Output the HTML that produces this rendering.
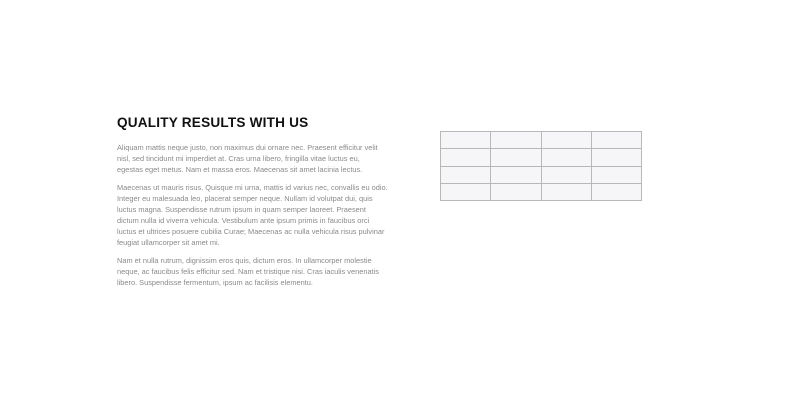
<!DOCTYPE html>
<html><head><style>
body{margin:0;width:800px;height:400px;background:#fff;position:relative;font-family:"Liberation Sans",sans-serif;overflow:hidden}
h1{position:absolute;left:117px;top:113px;margin:0;font-size:13.6px;font-weight:bold;color:#111;letter-spacing:0.2px;line-height:20px}
.p{position:absolute;left:117px;margin:0;font-size:7.4px;line-height:11.1px;color:#8a8a8a;white-space:nowrap}
table{position:absolute;left:440px;top:131px;border-collapse:collapse}
td{width:49.3px;height:16.3px;border:1px solid #b8b8b8;background:#f6f6f8;padding:0}
</style></head><body>
<h1>QUALITY RESULTS WITH US</h1>
<p class="p" style="top:142px">Aliquam mattis neque justo, non maximus dui ornare nec. Praesent efficitur velit<br>nisl, sed tincidunt mi imperdiet at. Cras urna libero, fringilla vitae luctus eu,<br>egestas eget metus. Nam et massa eros. Maecenas sit amet lacinia lectus.</p>
<p class="p" style="top:182px">Maecenas ut mauris risus. Quisque mi urna, mattis id varius nec, convallis eu odio.<br>Integer eu malesuada leo, placerat semper neque. Nullam id volutpat dui, quis<br>luctus magna. Suspendisse rutrum ipsum in quam semper laoreet. Praesent<br>dictum nulla id viverra vehicula. Vestibulum ante ipsum primis in faucibus orci<br>luctus et ultrices posuere cubilia Curae; Maecenas ac nulla vehicula risus pulvinar<br>feugiat ullamcorper sit amet mi.</p>
<p class="p" style="top:255px">Nam et nulla rutrum, dignissim eros quis, dictum eros. In ullamcorper molestie<br>neque, ac faucibus felis efficitur sed. Nam et tristique nisi. Cras iaculis venenatis<br>libero. Suspendisse fermentum, ipsum ac facilisis elementu.</p>
<table>
<tr><td></td><td></td><td></td><td></td></tr>
<tr><td></td><td></td><td></td><td></td></tr>
<tr><td></td><td></td><td></td><td></td></tr>
<tr><td></td><td></td><td></td><td></td></tr>
</table>
</body></html>
